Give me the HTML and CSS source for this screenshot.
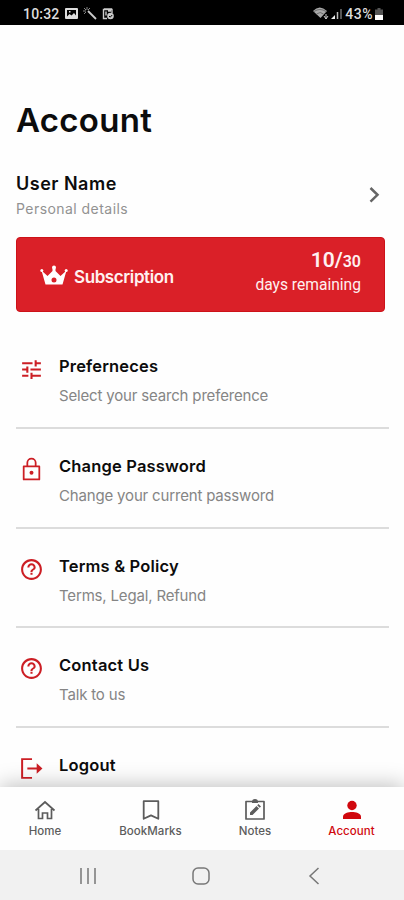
FILE: index.html
```html
<!DOCTYPE html>
<html lang="en">
  <head>
    <meta charset="UTF-8" />
    <meta name="viewport" content="width=device-width, initial-scale=1.0" />
    <title>Account</title>
    <link rel="stylesheet" href="styles.css">
  </head>
  <body>
    <div class="status-bar">
      <div class="status-left">
        <span class="clock">10:32</span>
        <svg width="13" height="11" viewBox="0 0 13 11">
          <path fill="#ddd" fill-rule="evenodd" d="M1 0h11a1 1 0 0 1 1 1v9a1 1 0 0 1-1 1H1a1 1 0 0 1-1-1V1a1 1 0 0 1 1-1zM2 2v6.500l2.500-2.500 2 1.500L9 5l2 2.500V2zM4 3h1.500v1.500H4z" />
        </svg>
        <svg width="14" height="13" viewBox="0 0 14 13">
          <path d="M5 4l8 8" stroke="#ccc" stroke-width="1.800" />
          <path d="M0 4h3M4 0v3M1 1l2 2M7 1L5 3M1 7l2-2" stroke="#888" />
        </svg>
        <svg width="12" height="12" viewBox="0 0 12 12">
          <path d="M10 5V1.500H1.500v9H5M2 1h8M4 3.500v4M6 3h3" fill="none" stroke="#ccc" stroke-width="1.400" />
          <circle cx="8.500" cy="8" r="3.300" fill="#ccc" />
          <path d="M7 8l1.200 1.200 2-2.200" fill="none" stroke="#000" />
        </svg>
      </div>
      <div class="status-right">
        <svg width="16" height="13" viewBox="0 0 16 13">
          <path d="M0 4Q6.500-3 14 4L7.500 11z" fill="#aaa" />
          <path d="M1 4.500q6-4 12 0M3.500 7q4-3 7 0" fill="none" stroke="#555" stroke-width=".7" />
          <path d="M13 7v5M11 9l2 3 2-3" fill="none" stroke="#ccc" />
        </svg>
        <svg width="12" height="12" viewBox="0 0 12 12">
          <path d="M0 11l4-4v4z" fill="#eee" />
          <path d="M6.500 4v7" stroke="#bbb" stroke-width="1.500" />
          <path d="M10 1v10" stroke="#555" stroke-width="2" />
        </svg>
        <span class="battery-text">43%</span>
        <svg width="8" height="12" viewBox="0 0 8 12">
          <path d="M2.500 0h3v1.500H8V7H0V1.500h2.500z" fill="#555" />
          <path d="M0 7h8v5H0z" fill="#fff" />
        </svg>
      </div>
    </div>

    <main class="content">
      <h1 class="page-title">Account</h1>

      <div class="user">
        <div class="user-info">
          <div class="user-name">User Name</div>
          <div class="user-details">Personal details</div>
        </div>
        <svg width="12" height="18" viewBox="0 0 12 18">
          <path d="M1.500 2l7 6.800-7 6.800" fill="none" stroke="#656565" stroke-width="2.500" />
        </svg>
      </div>

      <div class="subscription">
        <svg class="crown" width="28" height="21" viewBox="0 0 28 20">
          <path fill="#fff" fill-rule="evenodd" d="M1.500 5l6 5.500 5-5V3h3v2.500l5 5 6-5.500-4 14h-17zM14 12a2.500 2.500 0 1 0 0 5 2.500 2.500 0 0 0 0-5z" />
          <circle cx="1.800" cy="5" r="1.500" fill="#fff" />
          <circle cx="14" cy="2" r="2" fill="#fff" />
          <circle cx="26.200" cy="5" r="1.500" fill="#fff" />
        </svg>
        <span class="subscription-label">Subscription</span>
        <div class="remaining">
          <div class="days">10/<small>30</small></div>
          <div class="days-label">days remaining</div>
        </div>
      </div>

      <div class="menu">
        <div class="menu-item">
          <svg class="menu-icon" viewBox="0 0 24 24">
            <path fill="currentColor" d="M3 17v2h6v-2H3zM3 5v2h10V5H3zm10 16v-2h8v-2h-8v-2h-2v6h2zM7 9v2H3v2h4v2h2V9H7zm14 4v-2H11v2h10zm-6-4h2V7h4V5h-4V3h-2v6z" />
          </svg>
          <div>
            <div class="menu-title">Preferneces</div>
            <div class="menu-text">Select your search preference</div>
          </div>
        </div>
        <div class="menu-item">
          <svg class="menu-icon" viewBox="0 0 24 24">
            <path d="M4.500 9h15v12.500h-15zM8 9V5.500a4 4 0 0 1 8 0V9" fill="none" stroke="currentColor" stroke-width="1.700" stroke-linejoin="round" />
            <circle cx="12" cy="15.200" r="1.900" fill="currentColor" />
          </svg>
          <div>
            <div class="menu-title">Change Password</div>
            <div class="menu-text">Change your current password</div>
          </div>
        </div>
        <div class="menu-item">
          <svg class="menu-icon" viewBox="0 0 24 24">
            <path fill="currentColor" d="M11 17h2v-2h-2v2zm1-15C6.480 2 2 6.480 2 12s4.480 10 10 10 10-4.480 10-10S17.520 2 12 2zm0 18c-4.410 0-8-3.590-8-8s3.590-8 8-8 8 3.590 8 8-3.590 8-8 8zm0-14c-2.210 0-4 1.790-4 4h2c0-1.100.9-2 2-2s2 .9 2 2c0 1.500-3 1.500-3 4.300h2c0-1.800 3-2 3-4.300 0-2.210-1.790-4-4-4z" />
          </svg>
          <div>
            <div class="menu-title">Terms &amp; Policy</div>
            <div class="menu-text">Terms, Legal, Refund</div>
          </div>
        </div>
        <div class="menu-item">
          <svg class="menu-icon" viewBox="0 0 24 24">
            <path fill="currentColor" d="M11 17h2v-2h-2v2zm1-15C6.480 2 2 6.480 2 12s4.480 10 10 10 10-4.480 10-10S17.520 2 12 2zm0 18c-4.410 0-8-3.590-8-8s3.590-8 8-8 8 3.590 8 8-3.590 8-8 8zm0-14c-2.210 0-4 1.790-4 4h2c0-1.100.9-2 2-2s2 .9 2 2c0 1.500-3 1.500-3 4.300h2c0-1.800 3-2 3-4.300 0-2.210-1.790-4-4-4z" />
          </svg>
          <div>
            <div class="menu-title">Contact Us</div>
            <div class="menu-text">Talk to us</div>
          </div>
        </div>
        <div class="menu-item">
          <svg class="menu-icon" viewBox="0 0 24 24">
            <path d="M12.500 3H3v18h9.500M8 12h12" fill="none" stroke="currentColor" stroke-width="1.900" />
            <path d="M17 7l5.500 5-5.500 5z" fill="currentColor" />
          </svg>
          <div>
            <div class="menu-title">Logout</div>
          </div>
        </div>
      </div>
    </main>

    <nav class="tabs">
      <div class="tab">
        <svg width="24" height="24" viewBox="0 0 24 24">
          <path d="M2.500 12.500L12 4l9.500 8.500M5.500 11v9.500h4V15h5v5.500h4V11" fill="none" stroke="currentColor" stroke-width="1.700" />
        </svg>
        <span>Home</span>
      </div>
      <div class="tab">
        <svg width="24" height="24" viewBox="0 0 24 24">
          <path d="M4.700 3.200h14.600v17.600L12 17.400l-7.300 3.400z" fill="none" stroke="currentColor" stroke-width="1.800" stroke-linejoin="round" />
        </svg>
        <span>BookMarks</span>
      </div>
      <div class="tab">
        <svg width="24" height="24" viewBox="0 0 24 24">
          <path d="M3 3.500h18V21H3z" fill="none" stroke="currentColor" stroke-width="1.700" stroke-linejoin="round" />
          <path d="M9 4a3 3 0 0 1 6 0v1H9zM7 17v-2.500l6.500-6.500 2.500 2.500L9.500 17zM14.200 7.300l1.300-1.300 2.500 2.500-1.300 1.300z" fill="currentColor" />
        </svg>
        <span>Notes</span>
      </div>
      <div class="tab active">
        <svg width="24" height="24" viewBox="0 0 24 24">
          <circle cx="12" cy="7.500" r="4.700" fill="currentColor" />
          <path fill="currentColor" d="M3 21v-2.500C3 15.300 8.500 14 12 14s9 1.300 9 4.500V21z" />
        </svg>
        <span>Account</span>
      </div>
    </nav>

    <div class="system-nav">
      <svg width="18" height="18" viewBox="0 0 18 18">
        <path d="M2 1v16M9 1v16M16 1v16" stroke="#777" stroke-width="1.500" />
      </svg>
      <svg width="18" height="18" viewBox="0 0 18 18">
        <rect x="1" y="1" width="16" height="16" rx="5" fill="none" stroke="#777" stroke-width="1.500" />
      </svg>
      <svg width="18" height="18" viewBox="0 0 18 18">
        <path d="M13.500 1L5 9l8.500 8" fill="none" stroke="#777" stroke-width="1.500" />
      </svg>
    </div>
  </body>
</html>
```
FILE: styles.css
```css
body {
  font-family: Inter, "Noto Sans", sans-serif;
  display: flex;
  flex-direction: column;
  height: 900px;
  margin: 0;
  background-color: #fefefe;
  color: #0c0c0c;
  overflow: hidden;
}

svg {
  display: block;
  flex-shrink: 0;
}

.status-bar {
  display: flex;
  justify-content: space-between;
  height: 25px;
  flex-shrink: 0;
  padding: 0 21px 0 23px;
  background-color: #000;
  color: #ddd;
  font-family: Roboto, sans-serif;
  font-size: 14px;
  font-weight: 500;
}

.status-left,
.status-right {
  display: flex;
  align-items: center;
  padding-top: 2px;
}

.status-left {
  gap: 5px;
}

.status-right {
  gap: 2px;
}

.clock {
  letter-spacing: 0.2px;
}

.battery-text {
  letter-spacing: 0.5px;
}

.content {
  flex: 1;
  min-height: 0;
  overflow: hidden;
  padding: 75px 15px 0 16px;
  box-sizing: border-box;
}

.page-title {
  margin: 0;
  font-size: 33px;
  font-weight: 600;
  line-height: 41px;
  letter-spacing: 0.3px;
}

.user {
  display: flex;
  justify-content: space-between;
  align-items: center;
  height: 54px;
  margin-top: 27px;
  padding-right: 8px;
}

.user-name {
  font-size: 18px;
  font-weight: 600;
  line-height: 27px;
  letter-spacing: 0.5px;
}

.user-details {
  font-size: 14px;
  line-height: 23px;
  color: #929292;
  letter-spacing: 0.45px;
}

.subscription {
  display: flex;
  align-items: center;
  height: 75px;
  margin: 15px 4px 0 0;
  padding: 0 23px;
  box-sizing: border-box;
  border: 1px solid #cd1219;
  border-radius: 4px;
  background-color: #da2028;
  color: #fff0f0;
}

.crown {
  margin-top: 1px;
}

.subscription-label {
  margin: 4px 0 0 6px;
  font-size: 17px;
  font-weight: 600;
  letter-spacing: -0.4px;
}

.remaining {
  margin-left: auto;
  padding-bottom: 6px;
  font-family: Roboto, sans-serif;
  text-align: right;
}

.days {
  padding-top: 1px;
  font-size: 21px;
  font-weight: 600;
  line-height: 24px;
}

.days small {
  font-size: 16px;
}

.days-label {
  font-size: 15.6px;
  line-height: 22px;
}

.menu {
  margin-top: 17px;
}

.menu-item {
  display: flex;
  height: 99.8px;
  padding: 25px 0 0 3px;
  box-sizing: border-box;
  border-bottom: 2px solid #dcdcdc;
}

.menu-icon {
  width: 25px;
  height: 25px;
  margin: 3px 15px 0 0;
  color: #cc1e24;
}

.menu-title {
  font-size: 16.5px;
  font-weight: 600;
  line-height: 24px;
  letter-spacing: 0.17px;
}

.menu-text {
  margin-top: 6px;
  font-size: 15px;
  line-height: 24px;
  letter-spacing: -0.17px;
  color: #858585;
}

.tabs {
  position: relative;
  display: grid;
  grid-template-columns: 90px 121px 88px 1fr;
  height: 63px;
  flex-shrink: 0;
  background-color: #fefefe;
  box-shadow: 0 -2px 20px rgba(0, 0, 0, 0.25);
}

.tab {
  display: flex;
  flex-direction: column;
  align-items: center;
  padding-top: 11px;
  color: #5c5c5c;
  font-size: 11.5px;
  font-weight: 500;
  line-height: 18px;
  letter-spacing: 0.05px;
}

.tab.active {
  color: #d0080e;
}

.system-nav {
  position: relative;
  display: flex;
  align-items: center;
  justify-content: center;
  gap: 95px;
  height: 50px;
  flex-shrink: 0;
  padding: 2px 2px 0 0;
  box-sizing: border-box;
  background-color: #f1f1f1;
}
```
